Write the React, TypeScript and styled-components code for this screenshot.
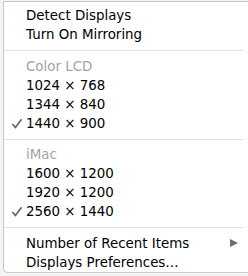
import React from "react";
import styled, { createGlobalStyle } from "styled-components";

const Global = createGlobalStyle`
  html, body { margin: 0; padding: 0; background: #f4f4f4; }
  body { width: 248px; height: 276px; overflow: hidden; }
`;

const Menu = styled.div`
  margin: 1px 0 0 3px;
  width: 250px;
  height: 272px;
  box-sizing: border-box;
  background: #ffffff;
  border: 1px solid #c8c8c8;
  border-right: none;
  border-radius: 0 0 0 5px;
  padding: 4px 0 0 0;
  font-family: "DejaVu Sans", sans-serif;
  font-size: 13.4px;
  color: #000;
  display: flex;
  flex-direction: column;
`;

const Row = styled.div<{ $header?: boolean }>`
  height: 19px;
  display: flex;
  align-items: center;
  position: relative;
  padding-left: 22px;
  color: ${(p) => (p.$header ? "#a3a3a3" : "#000")};
  white-space: nowrap;
`;

const Check = styled.svg`
  position: absolute;
  left: 8px;
  top: 5px;
  width: 10px;
  height: 10px;
`;

const Arrow = styled.span`
  position: absolute;
  left: 226px;
  top: 5px;
  width: 0;
  height: 0;
  border-top: 4.5px solid transparent;
  border-bottom: 4.5px solid transparent;
  border-left: 8px solid #6e6e6e;
`;

const Separator = styled.div`
  height: 1px;
  background: #e3e3e3;
  margin: 6px 0 6px 0;
  width: 239px;
`;

type Item = { label: string; header?: boolean; checked?: boolean; submenu?: boolean } | "sep";

const items: Item[] = [
  { label: "Detect Displays" },
  { label: "Turn On Mirroring" },
  "sep",
  { label: "Color LCD", header: true },
  { label: "1024 × 768" },
  { label: "1344 × 840" },
  { label: "1440 × 900", checked: true },
  "sep",
  { label: "iMac", header: true },
  { label: "1600 × 1200" },
  { label: "1920 × 1200" },
  { label: "2560 × 1440", checked: true },
  "sep",
  { label: "Number of Recent Items", submenu: true },
  { label: "Displays Preferences…" },
];

export default function App() {
  return (
    <>
      <Global />
      <Menu>
        {items.map((it, i) =>
          it === "sep" ? (
            <Separator key={i} />
          ) : (
            <Row key={i} $header={it.header}>
              {it.checked && (
                <Check viewBox="0 0 10 10">
                  <path
                    d="M0.8 5.6 L3.4 8.6 L9.2 0.8"
                    fill="none"
                    stroke="#606060"
                    strokeWidth="1.6"
                    strokeLinecap="round"
                    strokeLinejoin="round"
                  />
                </Check>
              )}
              {it.label}
              {it.submenu && <Arrow />}
            </Row>
          )
        )}
      </Menu>
    </>
  );
}
